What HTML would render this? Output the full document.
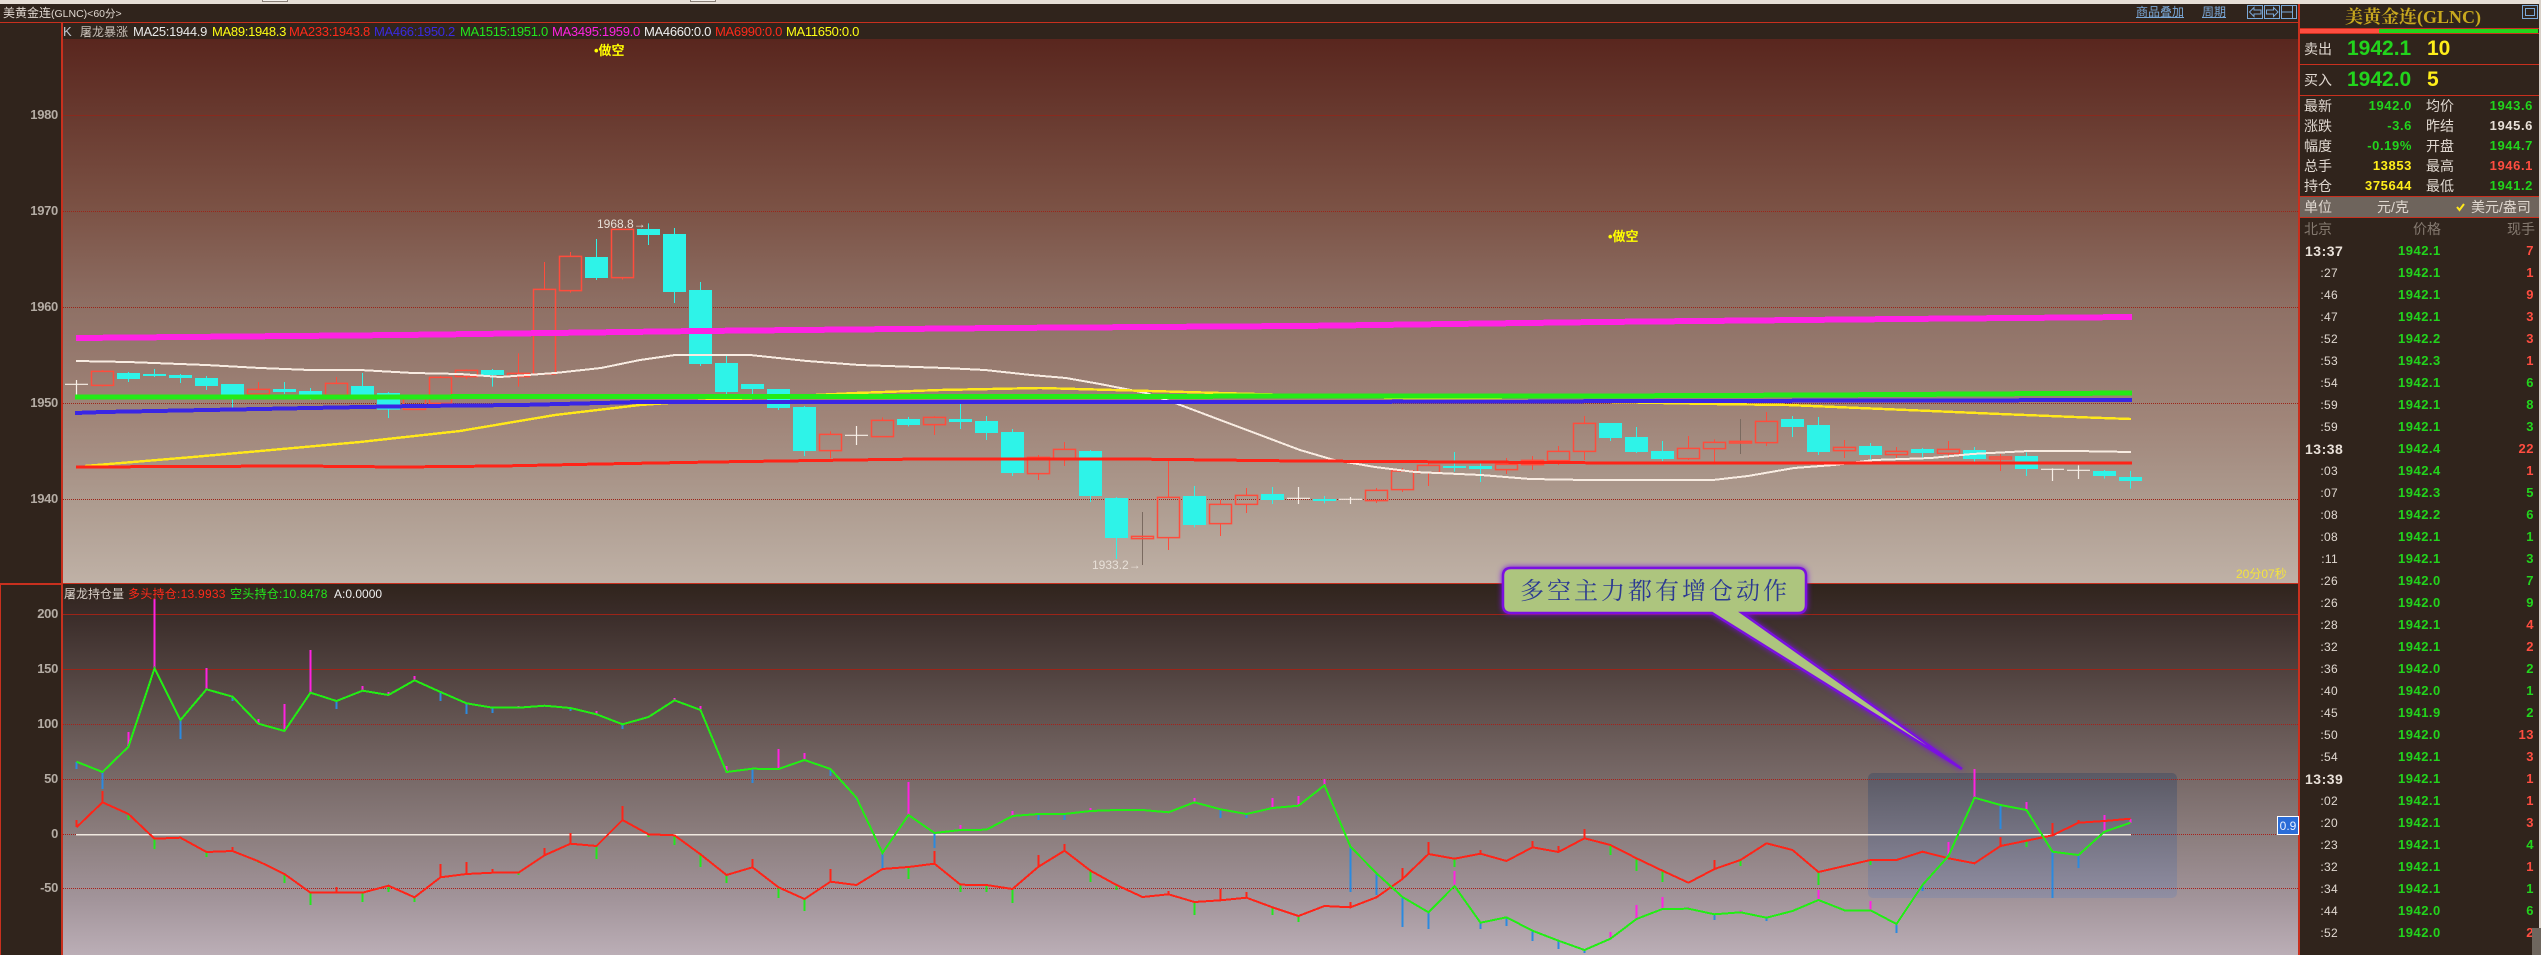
<!DOCTYPE html>
<html><head><meta charset="utf-8"><title>美黄金连</title>
<style>
html,body{margin:0;padding:0;background:#30241c;}
#r{position:relative;width:2541px;height:955px;overflow:hidden;background:#30241c;font-family:"Liberation Sans","WenQuanYi Zen Hei","Noto Sans CJK SC",sans-serif;font-size:12px;color:#e0d8d0;}
.a{position:absolute;}
.t{position:absolute;white-space:nowrap;line-height:16px;height:16px;}
.m{font-size:13px;letter-spacing:-.3px;}
.ax{position:absolute;left:0;width:58px;text-align:right;line-height:14px;font-size:13px;letter-spacing:-.3px;color:#b4aca4;font-weight:bold;}
.l{position:absolute;left:2304px;font-size:14px;line-height:16px;color:#e0d8d0;white-space:nowrap;}
.l2{left:2426px;}
.v{position:absolute;font-size:13px;line-height:16px;font-weight:bold;letter-spacing:.6px;text-align:right;width:90px;white-space:nowrap;}
.v1{left:2322px;}.v2{left:2443px;}
.g{color:#22d41c;}.y{color:#ffee1a;}.rd{color:#ff4d40;}.w{color:#e8e0d8;}
.row{position:absolute;left:2300px;width:236px;height:16px;line-height:16px;font-weight:bold;}
.row b{position:absolute;left:5px;font-size:14px;letter-spacing:.5px;color:#e8e0d8;}
.row i{position:absolute;left:0;width:38px;text-align:right;font-style:normal;font-weight:normal;font-size:12px;letter-spacing:.3px;color:#e0d8d0;}
.row u{position:absolute;left:98px;text-decoration:none;font-size:13px;letter-spacing:.5px;color:#22d41c;}
.row s{position:absolute;right:2px;text-decoration:none;font-size:13px;letter-spacing:.5px;}
svg{position:absolute;left:0;top:0;}
.z path{vector-effect:non-scaling-stroke;}
</style></head><body><div id="r">

<div class="a" style="left:0;top:0;width:2541px;height:4px;background:#e6ded6"></div>
<div class="a" style="left:262px;top:0;width:24px;height:1px;border:1px solid #8a8078;border-top:0;background:#f4f0ec"></div>
<div class="a" style="left:690px;top:0;width:24px;height:1px;border:1px solid #8a8078;border-top:0;background:#f4f0ec"></div>
<div class="a" style="left:2539px;top:0;width:2px;height:955px;background:#d8d0c8"></div>

<!-- chart backgrounds -->
<div class="a" style="left:63px;top:39px;width:2235px;height:544px;background:linear-gradient(180deg,#59261e 0%,#7a5043 30%,#8f7166 50%,#a08579 70%,#ad9b8f 85%,#bfb1a6 100%)"></div>
<div class="a" style="left:63px;top:584px;width:2235px;height:371px;background:linear-gradient(180deg,#30241c 0%,#3a2c29 8%,#655653 38%,#8c7e7e 68%,#a2949a 85%,#bbaeb6 100%)"></div>
<div class="a" style="left:1868px;top:773px;width:309px;height:125px;border-radius:5px;background:linear-gradient(180deg,#5a5964,#908ea2)"></div>
<div class="a" style="left:2300px;top:196px;width:239px;height:20px;background:#6e645c;border-top:1px solid #c8301e;border-bottom:1px solid #c8301e"></div>

<svg width="2541" height="955" xmlns="http://www.w3.org/2000/svg">
<!-- frame -->
<g fill="none" shape-rendering="crispEdges">
<path d="M0 22.5H2298" stroke="#c8301e"/>
<path d="M62 23V955" stroke="#c8301e" stroke-width="2"/>
<path d="M2299 4V955" stroke="#c8301e" stroke-width="2"/>
<path d="M0 583.5H2298" stroke="#c8301e"/>
<path d="M0 584.5H62" stroke="#c8301e"/>
<path d="M.5 584V955" stroke="#c8301e" stroke-width="1"/>
<!-- grid -->
<path d="M63 115.5H2298" stroke="#8a2a1e"/>
<path d="M63 211.5H2298M63 307.5H2298M63 403.5H2298M63 499.5H2298" stroke="#9c2418" stroke-dasharray="1 1"/>
<path d="M63 614.5H2298M63 669.5H2298" stroke="#9c2418"/>
<path d="M63 724.5H2298M63 779.5H2298M63 834.5H2298M63 888.5H2298" stroke="#a8201a" stroke-dasharray="1 1"/>
</g>

<!-- candles: y in 3x coordinates -->
<g class="z" transform="translate(0,200) scale(1,.33333)" fill="none">
<path stroke="#2ef3e8" stroke-width="1" d="M128.5 516V546M154.5 507V531M180.5 522V549M206.5 528V570M232.5 552V624M284.5 546V582M310.5 564V600M362.5 519V585M388.5 576V654M492.5 507V560M596.5 117V240M648.5 70V135M674.5 84V309M700.5 246V498M726.5 468V610M752.5 552V590M778.5 567V630M804.5 618V768M908.5 651V679M960.5 605V687M986.5 648V720M1012.5 687V828M1090.5 750V906M1116.5 891V1077M1194.5 858V982M1272.5 861V912M1324.5 888V910M1454.5 756V815M1480.5 790V846M1610.5 669V723M1636.5 681V759M1662.5 723V783M1792.5 648V711M1818.5 651V765M1870.5 729V780M1922.5 744V772M1974.5 741V786M2026.5 757V828M2104.5 810V836M2130.5 813V866"/>
<path stroke="#2ef3e8" stroke-width="23" d="M128.5 519V537M154.5 522V528M180.5 525V534M206.5 534V558M232.5 552V585M284.5 567V576M310.5 573V585M362.5 558V585M388.5 579V629M492.5 510V525M596.5 171V234M648.5 87V105M674.5 102V276M700.5 270V492M726.5 489V576M752.5 552V567M778.5 567V624M804.5 621V753M908.5 657V675M960.5 657V666M986.5 663V699M1012.5 696V819M1090.5 753V888M1116.5 894V1014M1194.5 888V975M1272.5 882V900M1324.5 897V903M1454.5 798V804M1480.5 798V807M1610.5 669V714M1636.5 711V756M1662.5 753V777M1792.5 657V681M1818.5 675V756M1870.5 738V765M1922.5 747V759M1974.5 750V777M2026.5 768V807M2104.5 813V828M2130.5 831V843"/>
<path stroke="#ff4c3c" stroke-width="1" d="M102.5 510V514M102.5 556V560M258.5 546V568M336.5 531V550M440.5 528V532M466.5 508V511M466.5 530V537M518.5 460V520M518.5 530V560M544.5 186V268M570.5 156V169M570.5 272V278M622.5 233V239M830.5 694V703M830.5 752V775M882.5 652V661M934.5 648V652M934.5 674V705M1038.5 765V772M1038.5 821V840M1064.5 726V748M1064.5 778V798M1168.5 783V892M1168.5 1013V1050M1220.5 900V913M1220.5 971V1008M1246.5 864V886M1246.5 913V939M1376.5 864V871M1376.5 902V909M1402.5 804V813M1402.5 869V876M1428.5 790V796M1428.5 818V858M1506.5 774V793M1506.5 809V822M1532.5 768V781M1532.5 794V810M1558.5 738V754M1558.5 782V795M1584.5 648V670M1584.5 754V780M1688.5 708V745M1688.5 776V780M1714.5 718V727M1714.5 746V785M1766.5 636V664M1766.5 728V738M1844.5 720V742M1844.5 752V774M1896.5 741V754M1896.5 764V777M1948.5 723V748M1948.5 760V775M2000.5 762V813"/>
<path stroke="#7a6a60" stroke-width="1" d="M1142.5 936V1095M1740.5 657V762"/>
<path stroke="#ff4c3c" stroke-width="1.5" d="M91.5 514H113.5V556H91.5ZM247.5 568H269.5V582H247.5ZM325.5 550H347.5V585H325.5ZM403.5 595H425.5V628H403.5ZM429.5 532H451.5V610H429.5ZM455.5 511H477.5V530H455.5ZM507.5 520H529.5V530H507.5ZM533.5 268H555.5V522H533.5ZM559.5 169H581.5V272H559.5ZM611.5 88H633.5V233H611.5ZM819.5 703H841.5V752H819.5ZM871.5 661H893.5V710H871.5ZM923.5 652H945.5V674H923.5ZM1027.5 772H1049.5V821H1027.5ZM1053.5 748H1075.5V778H1053.5ZM1131.5 1009H1153.5V1016H1131.5ZM1157.5 892H1179.5V1013H1157.5ZM1209.5 913H1231.5V971H1209.5ZM1235.5 886H1257.5V913H1235.5ZM1365.5 871H1387.5V902H1365.5ZM1391.5 813H1413.5V869H1391.5ZM1417.5 796H1439.5V818H1417.5ZM1495.5 793H1517.5V809H1495.5ZM1521.5 781H1543.5V794H1521.5ZM1547.5 754H1569.5V782H1547.5ZM1573.5 670H1595.5V754H1573.5ZM1677.5 745H1699.5V776H1677.5ZM1703.5 727H1725.5V746H1703.5ZM1729.5 724H1751.5V729H1729.5ZM1755.5 664H1777.5V728H1755.5ZM1833.5 742H1855.5V752H1833.5ZM1885.5 754H1907.5V764H1885.5ZM1937.5 748H1959.5V760H1937.5ZM1989.5 771H2011.5V777H1989.5Z"/>
<path stroke="#f8f0e8" stroke-width="1.2" d="M65 553H88M76.5 540V585M845 706H868M856.5 678V735M1287 895H1310M1298.5 861V912M1339 898H1362M1350.5 891V912M2041 808H2064M2052.5 805V843M2067 811H2090M2078.5 796V837"/>
</g>

<!-- moving averages -->
<g fill="none" shape-rendering="crispEdges">
<polyline stroke="#f8ece2" stroke-width="2" points="76,361 128,362 180,364 206,365 260,368 310,370 360,370 413,373 460,374 500,377 555,373 601,368 640,360 675,355 750,355 807,361 859,365 945,368 985,370 1031,375 1066,378 1100,384 1146,393 1175,403 1300,450 1334,460 1375,467 1415,472 1481,475 1530,479 1587,480 1713,480 1748,476 1794,468 1834,465 1874,460 1931,458 1972,454 2029,451 2075,451 2131,452"/>
<polyline stroke="#ffe81a" stroke-width="2.4" points="85,466 193,457 260,451 360,442 460,431 555,415 640,405 712,400 856,393 940,390 1040,388 1150,391 1220,393 1400,398 1713,404 1788,405 1931,411 2000,414 2075,417 2131,419"/>
<polyline stroke="#ff2418" stroke-width="3" points="76,467 297,466 400,467 500,466 600,464 712,462 920,459 1130,459 1300,461 1470,462 1623,463 2132,463"/>
<polyline stroke="#3a26e4" stroke-width="4" points="75,413 103,412 155,411 207,410 260,409 310,408 363,407 415,406 520,405 640,402 1300,402 1680,401 2132,400"/>
<polyline stroke="#24ea18" stroke-width="5" points="75,397 1600,396 1820,395 2132,393"/>
<polyline stroke="#ff22e4" stroke-width="6" points="76,338 400,335 700,331 1000,328 1300,326 1600,322 1900,319 2132,317"/>
</g>

<!-- lower chart -->
<path d="M76 834.5H2131" stroke="#f0e8e0" stroke-width="1.5" fill="none" shape-rendering="crispEdges"/>
<g fill="none" stroke-width="2" shape-rendering="crispEdges">
<path stroke="#2a8ae0" d="M76.5 762V769M102.5 772V789M180.5 720V739M232.5 697V701M336.5 701V709M440.5 692V701M466.5 703V714M492.5 708V713M570.5 708V711M622.5 724V729M752.5 769V783M830.5 769V776M856.5 798V800M882.5 853V868M934.5 833V848M1038.5 814V820M1064.5 814V820M1220.5 809V818M1246.5 814V818M1350.5 847V892M1376.5 873V895M1402.5 897V927M1428.5 912V929M1480.5 923V929M1506.5 917V926M1532.5 931V941M1558.5 941V949M1584.5 950V953M1714.5 914V920M1766.5 918V921M1896.5 924V933M1922.5 885V891M2000.5 805V829M2052.5 852V898M2078.5 855V868"/>
<path stroke="#ff22e0" d="M128.5 732V747M154.5 599V668M206.5 668V689M258.5 719V724M284.5 704V731M310.5 650V693M362.5 686V691M388.5 692V695M414.5 676V680M518.5 706V708M596.5 711V714M674.5 698V700M700.5 706V710M726.5 766V772M778.5 749V769M804.5 753V760M908.5 782V815M960.5 825V830M1012.5 811V816M1090.5 808V811M1194.5 798V802M1272.5 798V808M1298.5 796V806M1324.5 779V785M1454.5 871V886M1610.5 932V939M1636.5 905V919M1662.5 897V909M1688.5 907V909M1740.5 910V912M1818.5 890V900M1870.5 901V910M1948.5 842V856M1974.5 769V798M2026.5 802V810M2104.5 815V832M2130.5 819V823"/>
<path stroke="#ff2418" d="M76.5 820V827M102.5 791V802M232.5 847V851M336.5 887V893M440.5 864V877M466.5 862V874M492.5 869V873M544.5 848V855M570.5 833V844M622.5 806V820M752.5 859V867M830.5 869V882M934.5 851V864M1038.5 855V867M1064.5 844V851M1168.5 891V894M1220.5 889V900M1246.5 892V898M1350.5 902V907M1402.5 868V879M1428.5 842V854M1480.5 850V854M1532.5 841V847M1558.5 846V852M1584.5 829V838M1714.5 860V869M2000.5 837V846M2052.5 823V835M2078.5 820V823"/>
<path stroke="#22e81c" d="M128.5 814V820M154.5 839V849M206.5 852V857M258.5 861V863M284.5 874V883M310.5 893V905M362.5 893V902M388.5 886V892M414.5 897V902M518.5 873V875M596.5 846V859M648.5 834V837M674.5 835V845M700.5 854V867M726.5 875V883M778.5 887V898M804.5 899V911M908.5 867V879M960.5 885V892M986.5 885V892M1012.5 889V903M1090.5 871V882M1116.5 885V890M1194.5 902V915M1272.5 907V915M1298.5 916V922M1454.5 859V867M1610.5 845V855M1636.5 858V871M1662.5 871V882M1740.5 860V866M1818.5 872V885M1870.5 860V865M2026.5 841V847"/>
</g>
<polyline fill="none" stroke="#ff2418" stroke-width="2" shape-rendering="crispEdges" points="76.5,827.3 102.5,802.3 128.5,814 154.5,838.7 180.5,837.7 206.5,852 232.5,851 258.5,861.3 284.5,874 310.5,892.7 336.5,892.7 362.5,892.7 388.5,885.7 414.5,897.3 440.5,877.3 466.5,874 492.5,872.7 518.5,872.7 544.5,855.3 570.5,843.7 596.5,846 622.5,820 648.5,834.3 674.5,835.3 700.5,854.3 726.5,875 752.5,867.3 778.5,887.3 804.5,899 830.5,881.7 856.5,885 882.5,869 908.5,867 934.5,863.7 960.5,884.7 986.5,885 1012.5,889 1038.5,866.7 1064.5,850.7 1090.5,870.7 1116.5,885 1142.5,897 1168.5,894.3 1194.5,902 1220.5,900.3 1246.5,897.7 1272.5,907.3 1298.5,916 1324.5,906 1350.5,907.3 1376.5,897.3 1402.5,879 1428.5,854 1454.5,858.7 1480.5,853.7 1506.5,861 1532.5,847.3 1558.5,852 1584.5,838.3 1610.5,845 1636.5,858.3 1662.5,870.7 1688.5,882.7 1714.5,869 1740.5,860 1766.5,843.3 1792.5,850 1818.5,872 1844.5,866 1870.5,860 1896.5,860 1922.5,851.7 1948.5,858.3 1974.5,863.3 2000.5,846 2026.5,840.7 2052.5,835.3 2078.5,822.7 2104.5,821 2130.5,818.7"/>
<polyline fill="none" stroke="#22ee14" stroke-width="2" shape-rendering="crispEdges" points="76.5,761.7 102.5,772 128.5,746.7 154.5,668.3 180.5,720 206.5,689.3 232.5,696.7 258.5,723.7 284.5,731 310.5,692.7 336.5,701 362.5,690.7 388.5,695 414.5,680.3 440.5,692 466.5,703.3 492.5,707.7 518.5,707.7 544.5,705.7 570.5,708 596.5,714.3 622.5,724.3 648.5,717 674.5,700.3 700.5,710 726.5,772 752.5,768.7 778.5,769 804.5,760 830.5,769 856.5,797.7 882.5,853 908.5,815 934.5,833 960.5,830 986.5,829.7 1012.5,816 1038.5,814 1064.5,814 1090.5,811 1116.5,810 1142.5,810 1168.5,812.3 1194.5,802.3 1220.5,809.3 1246.5,814 1272.5,808 1298.5,805.7 1324.5,785.3 1350.5,846.7 1376.5,873.3 1402.5,897 1428.5,912.3 1454.5,886 1480.5,922.7 1506.5,917.3 1532.5,930.7 1558.5,940.7 1584.5,950 1610.5,938.7 1636.5,919 1662.5,909 1688.5,908.7 1714.5,914.3 1740.5,912.3 1766.5,917.7 1792.5,911 1818.5,900 1844.5,910.3 1870.5,910.3 1896.5,924 1922.5,885 1948.5,856 1974.5,797.7 2000.5,805 2026.5,810 2052.5,851.7 2078.5,855 2104.5,831.7 2130.5,822.7"/>

<!-- callout -->
<path d="M1511 568H1798Q1806 568 1806 576V605Q1806 613 1798 613H1742L1962 769L1712 613H1511Q1503 613 1503 605V576Q1503 568 1511 568Z" fill="#adc57e" stroke="#7a10e0" stroke-width="2.5" style="filter:drop-shadow(0 0 3px #7a10e0)"/>

<!-- toolbar icons -->
<g fill="none" stroke="#7aa8d8" stroke-width="1" shape-rendering="crispEdges">
<rect x="2247.5" y="5.5" width="15" height="13"/><rect x="2264.5" y="5.5" width="15" height="13"/><rect x="2281.5" y="5.5" width="15" height="13"/>
<rect x="2522.5" y="5.5" width="15" height="13"/><rect x="2525.5" y="8.5" width="9" height="7"/>
<path d="M2292.5 5V18M2281 12H2292"/>
</g>
<g fill="none" stroke="#7aa8d8" stroke-width="1">
<path d="M2249.5 12L2254 7.5V10H2261V14H2254V16.5Z"/>
<path d="M2278 12L2273.5 7.5V10H2266.5V14H2273.5V16.5Z"/>
</g>
<path d="M2457 207l2.500 3 4.500-6" fill="none" stroke="#ffe81a" stroke-width="2"/>
<!-- bar -->
<rect x="2300" y="28" width="239" height="1" fill="#c8301e"/>
<rect x="2300" y="29" width="79" height="4" fill="#ff4d40"/>
<rect x="2379" y="29" width="159" height="4" fill="#22d41c"/>
<rect x="2300" y="33" width="239" height="1" fill="#c8301e"/>
<rect x="2300" y="64" width="239" height="1" fill="#c8301e"/>
<rect x="2300" y="95" width="239" height="1" fill="#c8301e"/>
</svg>

<!-- top text -->
<div class="t" style="left:3px;top:5px;font-size:12px">美黄金连<span style="font-size:10.5px">(GLNC)&lt;60分&gt;</span></div>
<div class="t" style="left:2136px;top:4px;color:#7aa8d8;text-decoration:underline">商品叠加</div>
<div class="t" style="left:2202px;top:4px;color:#7aa8d8;text-decoration:underline">周期</div>

<!-- info bar -->
<div class="t m" style="left:63px;top:24px;color:#c0c8d0">K</div>
<div class="t" style="left:80px;top:24px;color:#c8c0b8">屠龙暴涨</div>
<div class="t m" style="left:133px;top:24px;color:#e8e8e8">MA25:1944.9</div>
<div class="t m" style="left:212px;top:24px;color:#ffff14">MA89:1948.3</div>
<div class="t m" style="left:289px;top:24px;color:#ff2a1a">MA233:1943.8</div>
<div class="t m" style="left:374px;top:24px;color:#3a2ae0">MA466:1950.2</div>
<div class="t m" style="left:460px;top:24px;color:#22e81c">MA1515:1951.0</div>
<div class="t m" style="left:552px;top:24px;color:#ff22e0">MA3495:1959.0</div>
<div class="t m" style="left:644px;top:24px;color:#f0f0f0">MA4660:0.0</div>
<div class="t m" style="left:715px;top:24px;color:#ff2a1a">MA6990:0.0</div>
<div class="t m" style="left:786px;top:24px;color:#ffff14">MA11650:0.0</div>

<div class="t" style="left:594px;top:43px;color:#ffff00;font-weight:bold;font-size:13px">•做空</div>
<div class="t" style="left:1608px;top:229px;color:#ffff00;font-weight:bold;font-size:13px">•做空</div>
<div class="t" style="left:597px;top:216px;color:#e8e0d8">1968.8→</div>
<div class="t" style="left:1092px;top:557px;color:#e8e0d8">1933.2→</div>
<div class="t" style="left:2236px;top:566px;color:#f4e43c">20分07秒</div>

<!-- axis -->
<div class="ax" style="top:108px">1980</div>
<div class="ax" style="top:204px">1970</div>
<div class="ax" style="top:300px">1960</div>
<div class="ax" style="top:396px">1950</div>
<div class="ax" style="top:492px">1940</div>
<div class="ax" style="top:607px">200</div>
<div class="ax" style="top:662px">150</div>
<div class="ax" style="top:717px">100</div>
<div class="ax" style="top:772px">50</div>
<div class="ax" style="top:827px">0</div>
<div class="ax" style="top:881px">-50</div>

<!-- lower title -->
<div class="t" style="left:64px;top:586px;color:#d8d0c8">屠龙持仓量</div>
<div class="t" style="left:128px;top:586px;color:#ff2a1a;letter-spacing:.25px">多头持仓:13.9933</div>
<div class="t" style="left:230px;top:586px;color:#22e81c;letter-spacing:.25px">空头持仓:10.8478</div>
<div class="t" style="left:334px;top:586px;color:#f0f0f0">A:0.0000</div>

<div class="t" style="left:1520px;top:574px;height:30px;line-height:30px;font-size:24px;letter-spacing:3px;color:#2c3a92;font-family:'Noto Serif CJK SC','Liberation Serif',serif">多空主力都有增仓动作</div>

<div class="a" style="left:2277px;top:816px;width:20px;height:17px;background:#2a6cd8;border:1px solid #fff;color:#e8f0ff;text-align:center;line-height:18px;font-size:12px">0.9</div>

<!-- right panel -->
<div class="t" style="left:2345px;top:6px;height:22px;line-height:22px;font-size:18px;color:#c8a81e;font-family:'Liberation Serif','Noto Serif CJK SC',serif;font-weight:bold">美黄金连(GLNC)</div>

<div class="l" style="top:41px">卖出</div>
<div class="t" style="left:2347px;top:36px;height:26px;line-height:26px;font-size:21px;font-weight:bold;color:#22d41c">1942.1</div>
<div class="t" style="left:2427px;top:36px;height:26px;line-height:26px;font-size:21px;font-weight:bold;color:#ffee1a">10</div>
<div class="l" style="top:72px">买入</div>
<div class="t" style="left:2347px;top:67px;height:26px;line-height:26px;font-size:21px;font-weight:bold;color:#22d41c">1942.0</div>
<div class="t" style="left:2427px;top:67px;height:26px;line-height:26px;font-size:21px;font-weight:bold;color:#ffee1a">5</div>

<div class="l" style="top:98px">最新</div><div class="v v1 g" style="top:98px">1942.0</div><div class="l l2" style="top:98px">均价</div><div class="v v2 g" style="top:98px">1943.6</div>
<div class="l" style="top:118px">涨跌</div><div class="v v1 g" style="top:118px">-3.6</div><div class="l l2" style="top:118px">昨结</div><div class="v v2 w" style="top:118px">1945.6</div>
<div class="l" style="top:138px">幅度</div><div class="v v1 g" style="top:138px">-0.19%</div><div class="l l2" style="top:138px">开盘</div><div class="v v2 g" style="top:138px">1944.7</div>
<div class="l" style="top:158px">总手</div><div class="v v1 y" style="top:158px">13853</div><div class="l l2" style="top:158px">最高</div><div class="v v2 rd" style="top:158px">1946.1</div>
<div class="l" style="top:178px">持仓</div><div class="v v1 y" style="top:178px">375644</div><div class="l l2" style="top:178px">最低</div><div class="v v2 g" style="top:178px">1941.2</div>

<div class="l" style="top:199px">单位</div>
<div class="l" style="top:199px;left:2377px">元/克</div>
<div class="l" style="top:199px;left:2471px">美元/盎司</div>

<div class="l" style="top:221px;color:#857a70">北京</div>
<div class="l" style="top:221px;left:2413px;color:#857a70">价格</div>
<div class="l" style="top:221px;left:2507px;color:#857a70">现手</div>

<div class="row" style="top:243px"><b>13:37</b><u>1942.1</u><s class="rd">7</s></div>
<div class="row" style="top:265px"><i>:27</i><u>1942.1</u><s class="rd">1</s></div>
<div class="row" style="top:287px"><i>:46</i><u>1942.1</u><s class="rd">9</s></div>
<div class="row" style="top:309px"><i>:47</i><u>1942.1</u><s class="rd">3</s></div>
<div class="row" style="top:331px"><i>:52</i><u>1942.2</u><s class="rd">3</s></div>
<div class="row" style="top:353px"><i>:53</i><u>1942.3</u><s class="rd">1</s></div>
<div class="row" style="top:375px"><i>:54</i><u>1942.1</u><s class="g">6</s></div>
<div class="row" style="top:397px"><i>:59</i><u>1942.1</u><s class="g">8</s></div>
<div class="row" style="top:419px"><i>:59</i><u>1942.1</u><s class="g">3</s></div>
<div class="row" style="top:441px"><b>13:38</b><u>1942.4</u><s class="rd">22</s></div>
<div class="row" style="top:463px"><i>:03</i><u>1942.4</u><s class="rd">1</s></div>
<div class="row" style="top:485px"><i>:07</i><u>1942.3</u><s class="g">5</s></div>
<div class="row" style="top:507px"><i>:08</i><u>1942.2</u><s class="g">6</s></div>
<div class="row" style="top:529px"><i>:08</i><u>1942.1</u><s class="g">1</s></div>
<div class="row" style="top:551px"><i>:11</i><u>1942.1</u><s class="g">3</s></div>
<div class="row" style="top:573px"><i>:26</i><u>1942.0</u><s class="g">7</s></div>
<div class="row" style="top:595px"><i>:26</i><u>1942.0</u><s class="g">9</s></div>
<div class="row" style="top:617px"><i>:28</i><u>1942.1</u><s class="rd">4</s></div>
<div class="row" style="top:639px"><i>:32</i><u>1942.1</u><s class="rd">2</s></div>
<div class="row" style="top:661px"><i>:36</i><u>1942.0</u><s class="g">2</s></div>
<div class="row" style="top:683px"><i>:40</i><u>1942.0</u><s class="g">1</s></div>
<div class="row" style="top:705px"><i>:45</i><u>1941.9</u><s class="g">2</s></div>
<div class="row" style="top:727px"><i>:50</i><u>1942.0</u><s class="rd">13</s></div>
<div class="row" style="top:749px"><i>:54</i><u>1942.1</u><s class="rd">3</s></div>
<div class="row" style="top:771px"><b>13:39</b><u>1942.1</u><s class="rd">1</s></div>
<div class="row" style="top:793px"><i>:02</i><u>1942.1</u><s class="rd">1</s></div>
<div class="row" style="top:815px"><i>:20</i><u>1942.1</u><s class="rd">3</s></div>
<div class="row" style="top:837px"><i>:23</i><u>1942.1</u><s class="g">4</s></div>
<div class="row" style="top:859px"><i>:32</i><u>1942.1</u><s class="rd">1</s></div>
<div class="row" style="top:881px"><i>:34</i><u>1942.1</u><s class="g">1</s></div>
<div class="row" style="top:903px"><i>:44</i><u>1942.0</u><s class="g">6</s></div>
<div class="row" style="top:925px"><i>:52</i><u>1942.0</u><s class="rd">2</s></div>
<div class="a" style="left:2532px;top:928px;width:9px;height:27px;background:#6e665e"></div>

</div></body></html>
